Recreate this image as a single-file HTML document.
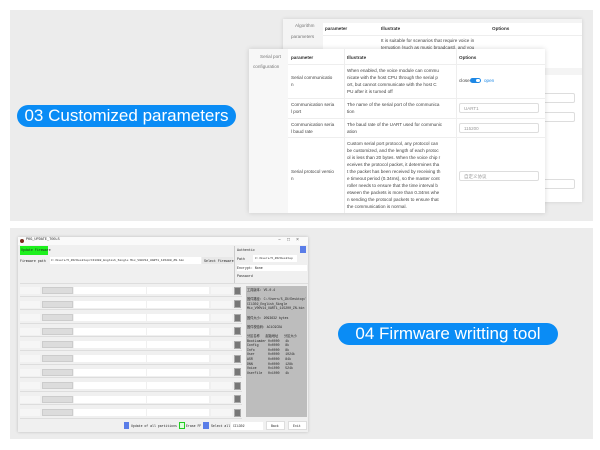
<!DOCTYPE html>
<html><head><meta charset="utf-8"><style>
*{margin:0;padding:0;box-sizing:border-box}
body{width:600px;height:450px;background:#fff;position:relative;overflow:hidden;font-family:"Liberation Sans","Noto Sans CJK SC",sans-serif;color:#333}
.a{position:absolute}
.pill{position:absolute;background:#0a8cf5;color:#fff;border-radius:12px;font-size:17px;line-height:21px;text-align:center;white-space:nowrap}
.t{position:absolute;font-size:4.6px;line-height:7px;color:#444;white-space:nowrap}
.b{font-weight:bold;color:#333}
.sel{position:absolute;border:1px solid #ddd;background:#fff;border-radius:2px;font-size:4.5px;color:#999;padding-left:4px;line-height:9px}
.m{font-family:"Liberation Mono",monospace;font-size:4px;white-space:nowrap;position:absolute;color:#222}
</style></head><body>
<!-- top panel -->
<div class="a" style="left:10px;top:10px;width:583px;height:211px;background:#ececec"></div>
<div class="pill" style="left:17px;top:105px;width:219px;height:22px">03 Customized parameters</div>
<!-- back card -->
<div class="a" style="left:283px;top:19px;width:299px;height:183px;background:#f4f4f4;box-shadow:0 0 4px rgba(0,0,0,.12)"></div>
<div class="a" style="left:323px;top:23px;width:259px;height:45px;background:#fff"></div>
<div class="a" style="left:323px;top:35px;width:259px;height:1px;background:#eee"></div>
<div class="t" style="left:295px;top:22px;color:#777">Algorithm</div>
<div class="t" style="left:291px;top:33px;color:#777">parameters</div>
<div class="t b" style="left:325px;top:25px">parameter</div>
<div class="t b" style="left:381px;top:25px">Illustrate</div>
<div class="t b" style="left:492px;top:25px">Options</div>
<div class="t" style="left:381px;top:37px">It is suitable for scenarios that require voice in</div>
<div class="t" style="left:381px;top:44px">terruption (such as music broadcast), and you</div>
<div class="a" style="left:545px;top:75px;width:37px;height:127px;background:#fff"></div>
<div class="sel" style="left:540px;top:93px;width:35px;height:10px"></div>
<div class="sel" style="left:540px;top:112px;width:35px;height:10px"></div>
<div class="sel" style="left:540px;top:179px;width:35px;height:10px"></div>
<!-- front card -->
<div class="a" style="left:249px;top:49px;width:296px;height:164px;background:#f7f7f7;box-shadow:0 0 5px rgba(0,0,0,.15)"></div>
<div class="a" style="left:288px;top:49px;width:257px;height:164px;background:#fff"></div>
<div class="a" style="left:288px;top:64px;width:257px;height:1px;background:#eee"></div>
<div class="a" style="left:288px;top:98px;width:257px;height:1px;background:#eee"></div>
<div class="a" style="left:288px;top:118px;width:257px;height:1px;background:#eee"></div>
<div class="a" style="left:288px;top:137px;width:257px;height:1px;background:#eee"></div>
<div class="a" style="left:344px;top:49px;width:1px;height:164px;background:#eee"></div>
<div class="a" style="left:456px;top:49px;width:1px;height:164px;background:#eee"></div>
<div class="t" style="left:260px;top:53px;color:#777">Serial port</div>
<div class="t" style="left:253px;top:63px;color:#777">configuration</div>
<div class="t b" style="left:291px;top:54px">parameter</div>
<div class="t b" style="left:347px;top:54px">Illustrate</div>
<div class="t b" style="left:459px;top:54px">Options</div>
<div class="t" style="left:291px;top:74px">Serial communicatio<br>n</div>
<div class="t" style="left:347px;top:67px">When enabled, the voice module can commu<br>nicate with the host CPU through the serial p<br>ort, but cannot communicate with the host C<br>PU after it is turned off</div>
<div class="t" style="left:459px;top:77px">close</div>
<div class="a" style="left:470px;top:78px;width:11px;height:5px;border-radius:3px;background:#1e88e5"></div>
<div class="a" style="left:476px;top:79px;width:4px;height:3px;border-radius:2px;background:#fff"></div>
<div class="t" style="left:484px;top:77px;color:#1e88e5">open</div>
<div class="t" style="left:291px;top:101px">Communication seria<br>l port</div>
<div class="t" style="left:347px;top:101px">The name of the serial port of the communica<br>tion</div>
<div class="sel" style="left:459px;top:103px;width:80px;height:10px">UART1</div>
<div class="t" style="left:291px;top:121px">Communication seria<br>l baud rate</div>
<div class="t" style="left:347px;top:121px">The baud rate of the UART used for communic<br>ation</div>
<div class="sel" style="left:459px;top:123px;width:80px;height:10px">115200</div>
<div class="t" style="left:291px;top:168px">Serial protocol versio<br>n</div>
<div class="t" style="left:347px;top:140px">Custom serial port protocol, any protocol can<br>be customized, and the length of each protoc<br>ol is less than 20 bytes. When the voice chip r<br>eceives the protocol packet, it determines tha<br>t the packet has been received by receiving th<br>e timeout period (0.34ms), so the master cont<br>roller needs to ensure that the time interval b<br>etween the packets is more than 0.34ms whe<br>n sending the protocol packets to ensure that<br>the communication is normal.</div>
<div class="sel" style="left:459px;top:171px;width:80px;height:10px">自定义协议</div>

<!-- bottom panel -->
<div class="a" style="left:10px;top:228px;width:583px;height:211px;background:#ececec"></div>
<div class="pill" style="left:338px;top:323px;width:220px;height:22px">04 Firmware writting tool</div>
<div class="a" style="left:18px;top:237px;width:290px;height:195px;background:#f0f0f0;box-shadow:0 0 3px rgba(0,0,0,.2)"></div>
<div class="a" style="left:18px;top:237px;width:290px;height:8px;background:#fafafa"></div>
<div class="a" style="left:20px;top:239px;width:4px;height:4px;border-radius:2px;background:#7a2a1a"></div>
<div class="m" style="left:26px;top:238px;font-size:3.5px">PKG_UPDATE_TOOLS</div>
<div class="m" style="left:278px;top:237px;font-size:5px;color:#555">–&nbsp;&nbsp;□&nbsp;&nbsp;×</div>
<div class="a" style="left:20px;top:246px;width:28px;height:9px;background:#1df01d"></div>
<div class="m" style="left:21px;top:248px;font-size:3.3px">Update Firmware</div>
<div class="m" style="left:20px;top:259px;font-size:3.3px">Firmware path</div>
<div class="a" style="left:50px;top:257px;width:151px;height:7px;background:#fff"></div>
<div class="m" style="left:51px;top:259px;font-size:3px">C:/Users/5_ZN/Desktop/CI1302_English_Single Mic_V00V14_UART1_115200_ZN.bin</div>
<div class="a" style="left:202px;top:257px;width:31px;height:7px;background:#e8e8e8"></div>
<div class="m" style="left:204px;top:259px;font-size:3.3px">Select Firmware</div>
<div class="a" style="left:234px;top:246px;width:1px;height:37px;background:#ccc"></div>
<div class="m" style="left:237px;top:248px;font-size:3.3px">Authentic</div>
<div class="a" style="left:300px;top:246px;width:6px;height:7px;background:#5a7de8"></div>
<div class="m" style="left:237px;top:257px;font-size:3.3px">Path</div>
<div class="a" style="left:253px;top:255px;width:44px;height:7px;background:#fff"></div>
<div class="m" style="left:255px;top:257px;font-size:3px">C:/Users/5_ZN/Desktop</div>
<div class="a" style="left:237px;top:265px;width:70px;height:6px;background:#fff"></div>
<div class="m" style="left:237px;top:266px;font-size:3.3px">Encrypt: None</div>
<div class="m" style="left:237px;top:274px;font-size:3.3px">Password</div>
<div class="a" style="left:20px;top:283px;width:288px;height:1px;background:#ddd"></div>
<div class="a" style="left:246px;top:286px;width:61px;height:131px;background:#bdbdbd"></div>
<div class="m" style="left:247px;top:288px;font-size:3.2px;line-height:4.6px">工具版本: V5.0.4<br><br>固件路径: C:/Users/5_ZN/Desktop/<br>CI1302_English_Single<br>Mic_V00V14_UART1_115200_ZN.bin<br><br>固件大小: 2093632 bytes<br><br>固件校验码: AC1C9CDA<br><br>分区名称&nbsp;&nbsp;&nbsp;起始地址&nbsp;&nbsp;&nbsp;分区大小<br>BootLoader&nbsp;0x0000&nbsp;&nbsp;&nbsp;4k<br>Config&nbsp;&nbsp;&nbsp;&nbsp;&nbsp;0x0000&nbsp;&nbsp;&nbsp;8k<br>Info&nbsp;&nbsp;&nbsp;&nbsp;&nbsp;&nbsp;&nbsp;0x0000&nbsp;&nbsp;&nbsp;8k<br>User&nbsp;&nbsp;&nbsp;&nbsp;&nbsp;&nbsp;&nbsp;0x0000&nbsp;&nbsp;&nbsp;1024k<br>ASR&nbsp;&nbsp;&nbsp;&nbsp;&nbsp;&nbsp;&nbsp;&nbsp;0x0000&nbsp;&nbsp;&nbsp;84k<br>DNN&nbsp;&nbsp;&nbsp;&nbsp;&nbsp;&nbsp;&nbsp;&nbsp;0x0000&nbsp;&nbsp;&nbsp;128k<br>Voice&nbsp;&nbsp;&nbsp;&nbsp;&nbsp;&nbsp;0x1000&nbsp;&nbsp;&nbsp;524k<br>UserFile&nbsp;&nbsp;&nbsp;0x1000&nbsp;&nbsp;&nbsp;4k</div>
<div id="rows"></div>
<div class="a" style="left:124px;top:422px;width:5px;height:7px;background:#5a7de8"></div>
<div class="m" style="left:131px;top:424px;font-size:3.2px">Update of all partitions</div>
<div class="a" style="left:179px;top:422px;width:6px;height:7px;border:1px solid #2c2;background:#dfd"></div>
<div class="m" style="left:186px;top:424px;font-size:3.2px">Erase FF</div>
<div class="a" style="left:203px;top:422px;width:6px;height:7px;background:#5a7de8"></div>
<div class="m" style="left:211px;top:424px;font-size:3.2px">Select all</div>
<div class="a" style="left:231px;top:422px;width:32px;height:8px;background:#fff"></div>
<div class="m" style="left:233px;top:424px;font-size:3.2px">CI1302</div>
<div class="a" style="left:266px;top:421px;width:19px;height:9px;background:#fff;border:1px solid #ddd"></div>
<div class="m" style="left:271px;top:424px;font-size:3.2px">Back</div>
<div class="a" style="left:288px;top:421px;width:19px;height:9px;background:#fff;border:1px solid #ddd"></div>
<div class="m" style="left:293px;top:424px;font-size:3.2px">Exit</div>
<script>
var h='';for(var i=0;i<10;i++){var y=287+i*13.6;
h+='<div class="a" style="left:20px;top:'+y+'px;width:20px;height:7px;background:#f6f6f6"></div>'+
'<div class="a" style="left:42px;top:'+y+'px;width:31px;height:7px;background:#dcdcdc;border:1px solid #ccc"></div>'+
'<div class="a" style="left:74px;top:'+y+'px;width:72px;height:7px;background:#fff"></div>'+
'<div class="a" style="left:147px;top:'+y+'px;width:62px;height:7px;background:#fff"></div>'+
'<div class="a" style="left:211px;top:'+y+'px;width:21px;height:7px;background:#f6f6f6"></div>'+
'<div class="a" style="left:234px;top:'+(y-0.5)+'px;width:7px;height:8px;background:#777;border:1px solid #aaa"></div>'+
'<div class="a" style="left:20px;top:'+(y+8.5)+'px;width:222px;height:1px;background:#ddd"></div>';}
document.getElementById('rows').innerHTML=h;
</script>
</body></html>
